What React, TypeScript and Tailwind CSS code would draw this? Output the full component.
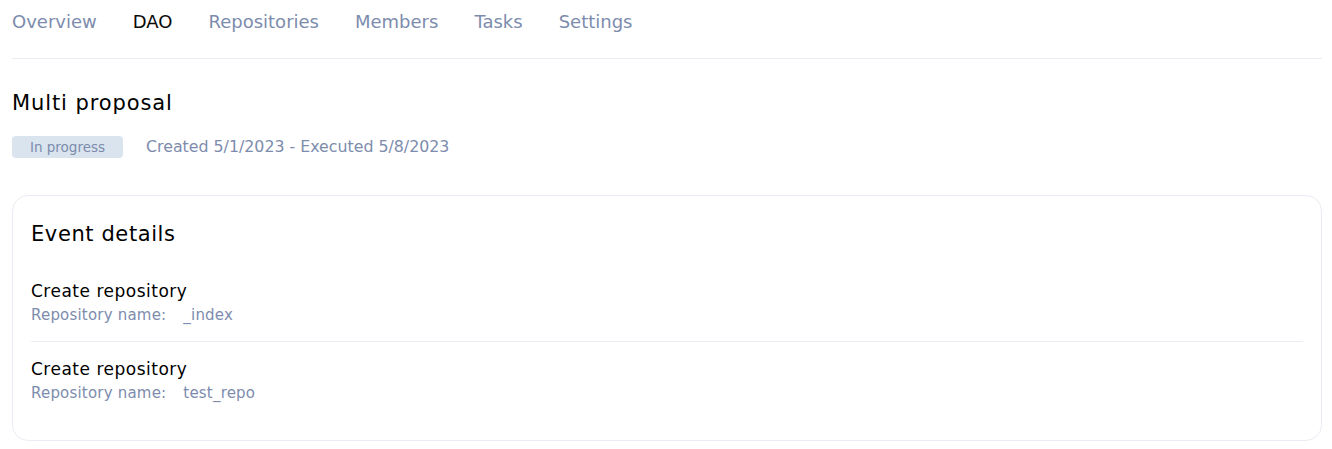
import React from 'react';

const tabs = ['Overview', 'DAO', 'Repositories', 'Members', 'Tasks', 'Settings'];

const events = [
    { title: 'Create repository', label: 'Repository name:', value: '_index' },
    { title: 'Create repository', label: 'Repository name:', value: 'test_repo' },
];

export default function App() {
    return (
        <div className="min-h-screen bg-white pl-3 pr-[10px] text-black" style={{ fontFamily: '"DejaVu Sans", sans-serif' }}>
            <nav className="flex items-start gap-9 border-b border-[#e9edf3] pb-[24px] pt-[10px] text-[18px] leading-[24px]">
                {tabs.map((tab) => (
                    <span key={tab} className={tab === 'DAO' ? 'text-[#0a0a0a]' : 'text-[#7d8cad]'}>
                        {tab}
                    </span>
                ))}
            </nav>

            <h1 className="mt-[30px] text-[21px] leading-[28px] tracking-[0.9px]">Multi proposal</h1>

            <div className="mt-[19px] flex h-[22px] items-center gap-[23px]">
                <span className="flex h-[22px] w-[111px] items-center justify-center rounded-[4px] bg-[#d9e4ee] text-[13.5px] text-[#7d8cad]">
                    In progress
                </span>
                <span className="text-[15.8px] leading-[22px] text-[#7d8cad]">Created 5/1/2023 - Executed 5/8/2023</span>
            </div>

            <div className="mt-[37px] rounded-[16px] border border-[#e9edf3] px-[18px] pb-[35px] pt-[24px]">
                <h2 className="text-[21px] leading-[28px] tracking-[0.6px]">Event details</h2>
                <div className="mt-[31px] flex flex-col">
                    {events.map((event, i) => (
                        <div key={i} className={i > 0 ? 'border-t border-[#e9edf3] pt-[15px]' : 'pb-[14px]'}>
                            <div className="text-[17px] leading-[24px] tracking-[0.5px]">{event.title}</div>
                            <div className="flex gap-[17px] text-[15px] leading-[24px] tracking-[0.2px] text-[#7d8cad]">
                                <span>{event.label}</span>
                                <span>{event.value}</span>
                            </div>
                        </div>
                    ))}
                </div>
            </div>
        </div>
    );
}
